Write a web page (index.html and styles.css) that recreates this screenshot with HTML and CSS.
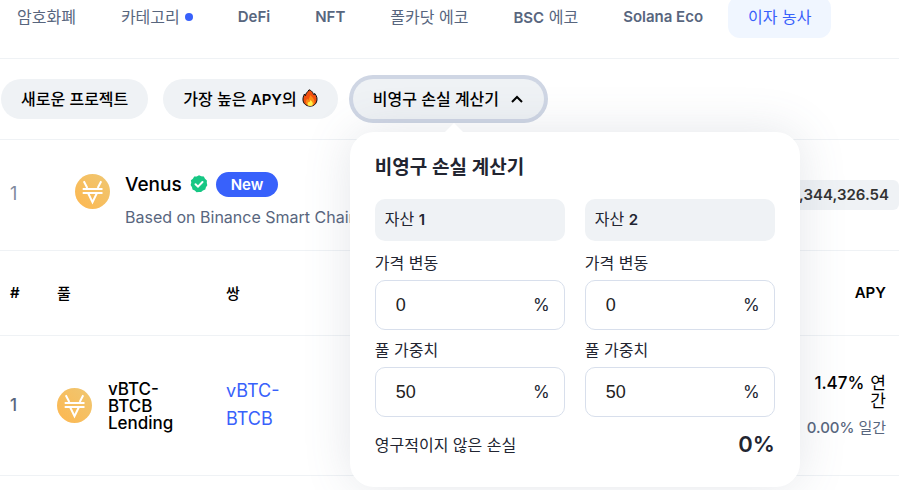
FILE: index.html
```
<!DOCTYPE html>
<html lang="ko">

<head>
    <meta charset="utf-8">
    <title>이자 농사</title>
    <link rel="stylesheet" href="styles.css">
</head>

<body>
    <!-- coin logo, used in both lists -->
    <svg class="defs" width="0" height="0">
        <defs>
            <linearGradient id="gold" x1="0" y1="1" x2="1" y2="0">
                <stop offset="0" stop-color="#fdb750" />
                <stop offset="1" stop-color="#efc772" />
            </linearGradient>
            <symbol id="venus" viewBox="0 0 35 35">
                <circle cx="17.500" cy="17.500" r="17.500" fill="url(#gold)" />
                <path d="M8.800 7.200L12.300 14M26.200 7.200L22.700 14M7.700 15h19.800M7.700 19h19.800M13.300 19.500l4.200 8.700 4.200-8.700" fill="none" stroke="#fff" stroke-width="2" />
            </symbol>
        </defs>
    </svg>

    <nav class="tabs">
        <a href="#" class="tab">암호화폐</a>
        <a href="#" class="tab">카테고리<span class="dot"></span></a>
        <a href="#" class="tab"><span class="latin">DeFi</span></a>
        <a href="#" class="tab"><span class="latin">NFT</span></a>
        <a href="#" class="tab">폴카닷 에코</a>
        <a href="#" class="tab"><span><span class="latin">BSC</span> 에코</span></a>
        <a href="#" class="tab"><span class="latin">Solana Eco</span></a>
        <a href="#" class="tab active">이자 농사</a>
    </nav>

    <div class="filters">
        <button class="chip">새로운 프로젝트</button>
        <button class="chip">
            <span>가장 높은 <span class="latin">APY</span>의</span>
            <svg class="fire" width="16" height="18" viewBox="0 0 16 18">
                <path d="M7 .8C11 2 11 5 12 6c.6-.3.7-1 .6-1.600C15 7 15.300 9.500 14.800 12c-.7 3.200-3.300 5.200-6.600 5.200S1.700 15.200 1.100 12C.6 9.200 1.500 6.700 2.500 5c.2 1 .5 1.500 1 1.800C3.500 4 5.500 3.500 7 .8z" fill="#f2500f" stroke="#111" stroke-width="1" />
                <path d="M8 6c2.500 2 4.500 4 4.500 7 0 2.500-2 4-4.300 4S4 15.500 4 13.200c0-1.600.6-2.700 1.300-3.600.3 1 .7 1.300 1.200 1.400C6.600 9 8.200 8.500 8 6z" fill="#fd8a12" />
                <path d="M8.300 11c1.500 1.200 2.500 2.200 2.500 3.800 0 1.400-1 2.200-2.500 2.200s-2.700-.8-2.700-2.200c0-.9.400-1.500.9-1.900.9.700 1.600-.3 1.800-1.900z" fill="#fff04a" />
            </svg>
        </button>
        <div class="calc">
            <button class="chip open">
                <span>비영구 손실 계산기</span>
                <svg class="caret" width="14" height="14" viewBox="0 0 14 14">
                    <path d="M2 11l5-5 5 5" fill="none" stroke="#000" stroke-width="2" />
                </svg>
            </button>
            <form class="popover">
                <h2>비영구 손실 계산기</h2>
                <div class="assets">
                    <div class="asset">
                        <div class="asset-name">자산 <span class="latin">1</span></div>
                        <label for="price1">가격 변동</label>
                        <div class="field"><input id="price1" type="text" value="0"><span>%</span></div>
                        <label for="weight1">풀 가중치</label>
                        <div class="field"><input id="weight1" type="text" value="50"><span>%</span></div>
                    </div>
                    <div class="asset">
                        <div class="asset-name">자산 <span class="latin">2</span></div>
                        <label for="price2">가격 변동</label>
                        <div class="field"><input id="price2" type="text" value="0"><span>%</span></div>
                        <label for="weight2">풀 가중치</label>
                        <div class="field"><input id="weight2" type="text" value="50"><span>%</span></div>
                    </div>
                </div>
                <div class="result">
                    <span>영구적이지 않은 손실</span>
                    <output>0%</output>
                </div>
            </form>
        </div>
    </div>

    <div class="project">
        <div class="rank">1</div>
        <svg class="coin" width="35" height="35"><use href="#venus" /></svg>
        <div class="about">
            <div class="title">
                <span class="name">Venus</span>
                <svg width="18" height="18" viewBox="0 0 18 18">
                    <path d="M9 .3l2.300 1 2.500.2 1.200 2.200 1.900 1.700-.1 2.600.5 2.200-1.400 2-.6 2.400-2.400.8-1.800 1.700L9 16.900l-2.500.3-1.700-1.700-2.300-.9-.5-2.400L.6 10l.7-2.300-.4-2.500 2-1.500 1.300-2.100 2.500-.2z" fill="#16c784" />
                    <path d="M5.500 9.200l2.500 2.400 4.500-4.600" fill="none" stroke="#fff" stroke-width="2" stroke-linecap="round" />
                </svg>
                <span class="badge">New</span>
            </div>
            <div class="chain">Based on Binance Smart Chain</div>
        </div>
        <div class="locked">$2,344,326.54</div>
    </div>

    <table class="pools">
        <thead>
            <tr>
                <th class="col-rank">#</th>
                <th class="col-pool">풀</th>
                <th class="col-pair">쌍</th>
                <th class="col-apy"><span class="latin">APY</span></th>
            </tr>
        </thead>
        <tbody>
            <tr>
                <td class="col-rank">1</td>
                <td class="col-pool">
                    <div class="pool">
                        <svg class="coin" width="35" height="35"><use href="#venus" /></svg>
                        <span>vBTC-BTCB Lending</span>
                    </div>
                </td>
                <td class="col-pair"><a href="#">vBTC-<br>BTCB</a></td>
                <td class="col-apy">
                    <div class="yearly"><span>1.47%</span> <span class="unit">연<br>간</span></div>
                    <div class="daily">0.00% <span class="unit">일간</span></div>
                </td>
            </tr>
        </tbody>
    </table>
</body>

</html>
```
FILE: styles.css
```
* {
    box-sizing: border-box;
}
body {
    min-height: 100vh;
    margin: 0 4px 0 0;
    background: #fff;
    color: #000;
    font-family: Inter, "Noto Sans CJK KR", sans-serif;
    font-size: 16px;
}
a {
    text-decoration: none;
}
.defs {
    position: absolute;
}
.latin {
    font-size: 15px;
    font-weight: 600;
}

/* tabs */
.tabs {
    display: flex;
    gap: 5px;
    height: 63px;
    margin: -4px 0 0 -3px;
    border-bottom: 1px solid #eff2f5;
    white-space: nowrap;
}
.tab {
    display: flex;
    align-items: center;
    gap: 5px;
    height: 42px;
    padding: 0 20px 2px;
    border-radius: 12px;
    color: #58667e;
}
.tab.active {
    background: #f0f6ff;
    color: #3861fb;
}
.dot {
    width: 8px;
    height: 8px;
    margin-top: 2px;
    border-radius: 50%;
    background: #3861fb;
}

/* filter chips */
.filters {
    display: flex;
    align-items: center;
    gap: 15px;
    height: 81px;
    padding-left: 1px;
    border-bottom: 1px solid #eff2f5;
}
.chip {
    display: flex;
    align-items: center;
    gap: 5px;
    height: 40px;
    padding: 0 20px 2px;
    border: 0;
    border-radius: 20px;
    background: #eff2f5;
    color: #000;
    font-family: inherit;
    font-size: 16px;
    font-weight: 500;
    white-space: nowrap;
}
.calc {
    position: relative;
}
.chip.open {
    gap: 11px;
    box-shadow: 0 0 0 4px #cfd6e4;
}

/* calculator */
.popover {
    position: absolute;
    z-index: 2;
    top: 53px;
    left: -3px;
    width: 450px;
    padding: 22px 25px 28px;
    border-radius: 24px;
    background: #fff;
    box-shadow: 0 0 48px rgba(88, 102, 126, 0.16);
    color: #222531;
}
.popover::before {
    content: "";
    position: absolute;
    top: -9px;
    left: 95px;
    border: 9px solid transparent;
    border-top: 0;
    border-bottom-color: #fff;
}
.popover h2 {
    margin: 0 0 17px;
    font-size: 19px;
    font-weight: 600;
    line-height: 28px;
}
.assets {
    display: grid;
    grid-template-columns: 1fr 1fr;
    gap: 20px;
}
.asset {
    min-width: 0;
}
.asset-name {
    height: 42px;
    margin-bottom: 8px;
    padding: 0 10px;
    border-radius: 10px;
    background: #eff2f5;
    line-height: 40px;
}
.asset label {
    display: block;
    margin-bottom: 3px;
    line-height: 28px;
}
.field {
    display: flex;
    align-items: center;
    height: 50px;
    margin-bottom: 6px;
    padding: 0 14px 0 20px;
    border: 1px solid #d8dfec;
    border-radius: 10px;
    font-size: 17px;
}
.field input {
    flex: 1;
    min-width: 0;
    padding: 0;
    border: 0;
    outline: 0;
    background: none;
    color: #222;
    font-family: "Liberation Sans", sans-serif;
    font-size: 18px;
}
.result {
    display: flex;
    align-items: center;
    justify-content: space-between;
    height: 30px;
    margin-top: 6px;
}
.result output {
    font-size: 22px;
    font-weight: 600;
}

/* project row */
.project {
    display: flex;
    align-items: flex-start;
    height: 111px;
    padding: 29px 0 0 10px;
    border-bottom: 1px solid #eff2f5;
}
.rank {
    width: 65px;
    color: #808a9d;
    font-size: 18px;
    line-height: 50px;
}
.project .coin {
    margin-top: 5px;
}
.about {
    margin-left: 15px;
}
.title {
    display: flex;
    align-items: center;
    gap: 8px;
    height: 30px;
}
.name {
    font-size: 19px;
    font-weight: 500;
}
.badge {
    height: 25px;
    padding: 0 15px;
    border-radius: 13px;
    background: #3861fb;
    color: #fff;
    font-size: 15px;
    font-weight: 600;
    line-height: 25px;
}
.chain {
    color: #58667e;
    line-height: 36px;
}
.locked {
    height: 30px;
    margin-top: 11px;
    margin-left: auto;
    padding: 0 10px;
    border-radius: 6px;
    background: #eff2f5;
    color: #333;
    font-size: 15px;
    font-weight: 600;
    line-height: 30px;
}

/* pools */
.pools {
    width: 100%;
    border-collapse: collapse;
    table-layout: fixed;
}
.pools th,
.pools td {
    padding: 0 10px;
    border-bottom: 1px solid #eff2f5;
    text-align: left;
}
.pools th {
    height: 84px;
    font-size: 15px;
    font-weight: 500;
}
.pools td {
    height: 140px;
    font-size: 17px;
    font-weight: 500;
}
.pools .col-rank {
    width: 47px;
    color: #58667e;
}
.pools th.col-rank {
    color: #000;
    font-weight: 600;
}
.pools .col-pool {
    width: 169px;
}
.pools .col-apy {
    padding-right: 13px;
    text-align: right;
}
.pool {
    display: flex;
    align-items: center;
    gap: 16px;
    line-height: 17px;
}
.pool span {
    width: 70px;
    padding-top: 2px;
}
.coin {
    flex: none;
}
.col-pair a {
    color: #3861fb;
    font-size: 18px;
    font-weight: 400;
    line-height: 28px;
}
.yearly {
    display: flex;
    justify-content: flex-end;
    gap: 6px;
    line-height: 18px;
}
.unit {
    font-weight: 400;
}
.daily {
    margin-top: 6px;
    color: #58667e;
    font-size: 15px;
}
```
